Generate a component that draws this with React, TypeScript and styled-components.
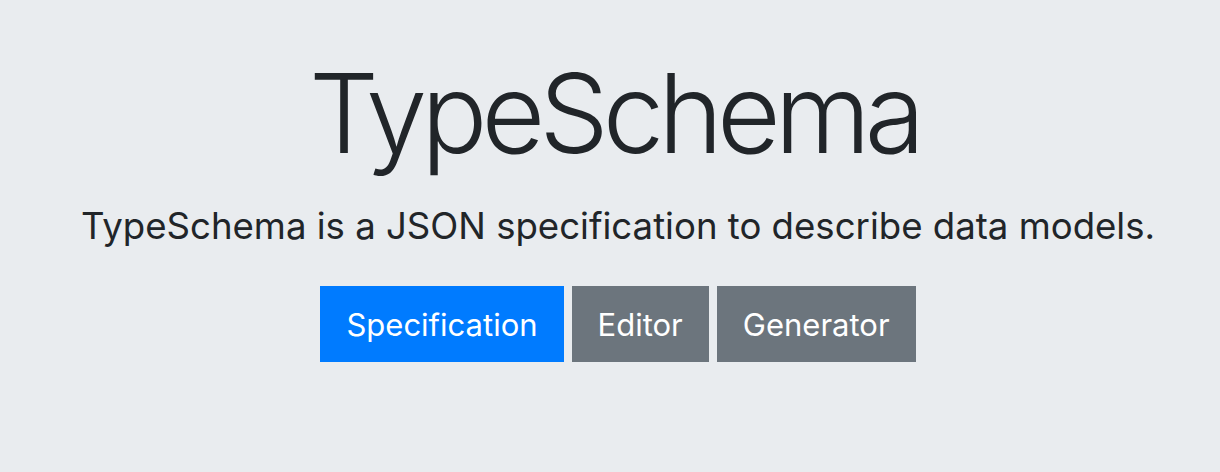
import React from "react";
import styled, { createGlobalStyle } from "styled-components";

const Global = createGlobalStyle`
  html, body { margin: 0; padding: 0; background: #e9ecef; }
  body { font-family: Inter, "Liberation Sans", sans-serif; color: #212529; }
`;

const Jumbotron = styled.section`
  box-sizing: border-box;
  width: 1220px;
  height: 472px;
  padding: 47px 0 0 16px;
  display: flex;
  flex-direction: column;
  align-items: center;
  background: #e9ecef;
`;

const Title = styled.h1`
  margin: 0 8px 0 0;
  font-size: 110px;
  font-weight: 350;
  line-height: 132px;
  letter-spacing: -6px;
`;

const Lead = styled.p`
  margin: 20px 0 0;
  font-size: 36.6px;
  font-weight: 400;
  line-height: 55px;
`;

const Actions = styled.div`
  margin-top: 32px;
  display: flex;
  gap: 8px;
`;

const Button = styled.a<{ $variant: "primary" | "secondary" }>`
  display: flex;
  align-items: center;
  justify-content: center;
  height: 76px;
  padding: 0 26px;
  font-size: 31px;
  color: #fff;
  text-decoration: none;
  background: ${(p) => (p.$variant === "primary" ? "#007bff" : "#6c757d")};
`;

export default function App() {
  return (
    <>
      <Global />
      <Jumbotron>
        <Title>TypeSchema</Title>
        <Lead>TypeSchema is a JSON specification to describe data models.</Lead>
        <Actions>
          <Button $variant="primary" href="#">Specification</Button>
          <Button $variant="secondary" href="#">Editor</Button>
          <Button $variant="secondary" href="#">Generator</Button>
        </Actions>
      </Jumbotron>
    </>
  );
}
